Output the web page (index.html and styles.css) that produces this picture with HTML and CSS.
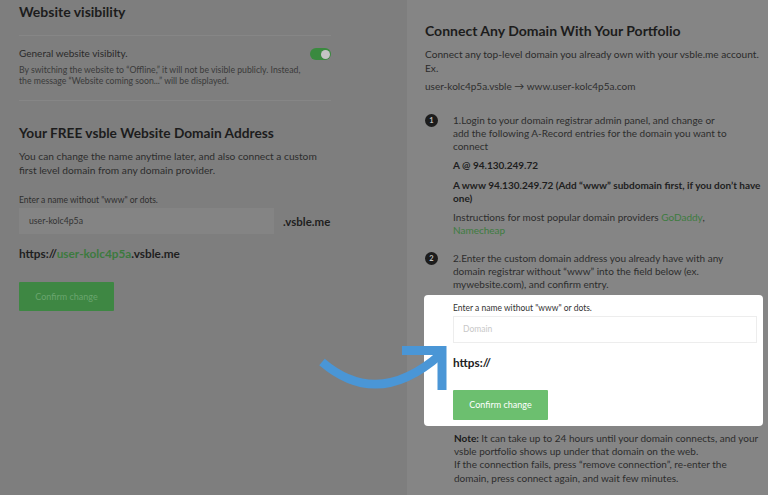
FILE: index.html
```html
<!DOCTYPE html>
<html>
<head>
<meta charset="utf-8">
<link rel="stylesheet" href="styles.css">
</head>
<body>
<div class="page">
  <section class="left">
    <h2 class="h-vis">Website visibility</h2>
    <div class="divider d1"></div>
    <div class="vis-row">
      <div class="vis-text">
        <div class="vis-title">General website visibilty.</div>
        <div class="vis-desc">By switching the website to “Offline,” it will not be visible publicly. Instead,<br>the message “Website coming soon...” will be displayed.</div>
      </div>
      <div class="toggle"><span class="knob"></span></div>
    </div>
    <div class="divider d2"></div>
    <h2 class="h-free">Your FREE vsble Website Domain Address</h2>
    <p class="free-body">You can change the name anytime later, and also connect a custom<br>first level domain from any domain provider.</p>
    <div class="label-l">Enter a name without "www" or dots.</div>
    <div class="input-row">
      <div class="input-l">user-kolc4p5a</div>
      <div class="suffix">.vsble.me</div>
    </div>
    <div class="url-l">https://<span class="green">user-kolc4p5a</span>.vsble.me</div>
    <div class="btn-l">Confirm change</div>
  </section>
  <section class="right">
    <h2 class="h-conn">Connect Any Domain With Your Portfolio</h2>
    <p class="conn-body">Connect any top-level domain you already own with your vsble.me account.<br>Ex.</p>
    <p class="example">user-kolc4p5a.vsble → www.user-kolc4p5a.com</p>
    <div class="step s1">
      <span class="num">1</span>
      <div class="step-text">
        <p>1.Login to your domain registrar admin panel, and change or<br>add the following A-Record entries for the domain you want to<br>connect</p>
        <p class="bold b1">A @ 94.130.249.72</p>
        <p class="bold b2">A www 94.130.249.72 (Add “www” subdomain first, if you don’t have<br>one)</p>
        <p class="instr">Instructions for most popular domain providers <span class="lgreen">GoDaddy</span>,<br><span class="lgreen">Namecheap</span></p>
      </div>
    </div>
    <div class="step s2">
      <span class="num">2</span>
      <div class="step-text">
        <p>2.Enter the custom domain address you already have with any<br>domain registrar without “www” into the field below (ex.<br>mywebsite.com), and confirm entry.</p>
      </div>
    </div>
    <div class="highlight">
      <div class="label-r">Enter a name without "www" or dots.</div>
      <div class="input-r">Domain</div>
      <div class="url-r">https://</div>
      <div class="btn-r">Confirm change</div>
    </div>
    <p class="note"><b>Note:</b> It can take up to 24 hours until your domain connects, and your<br>vsble portfolio shows up under that domain on the web.<br>If the connection fails, press “remove connection”, re-enter the<br>domain, press connect again, and wait few minutes.</p>
  </section>
  <svg class="arrow" width="768" height="495" viewBox="0 0 768 495">
    <path d="M322 362 Q 378 410 441 354" fill="none" stroke="#4a96d6" stroke-width="8.5"/>
    <path d="M402 350.5 H442 V390" fill="none" stroke="#4a96d6" stroke-width="9" stroke-linejoin="miter"/>
  </svg>
</div>
</body>
</html>
```
FILE: styles.css
```css
* { box-sizing: border-box; margin: 0; padding: 0; }
html, body { width: 768px; height: 495px; overflow: hidden; }
body { font-family: Lato, "Noto Sans", sans-serif; color: #2b2b2b; background: #7e7e7e; }
.page { position: relative; display: flex; width: 768px; height: 495px; }
.left { flex: none; width: 407px; min-width: 0; padding-left: 19px; padding-right: 76px; background: #7e7e7e; }
.right { flex: 1; min-width: 0; background: #858585; padding: 21px 5px 0 18px; }
h2 { font-weight: 700; color: #1c1c1c; }
.h-vis { font-size: 14px; line-height: 20px; margin-top: 2px; }
.divider { height: 1px; background: #868686; }
.d1 { margin-top: 13px; }
.vis-row { display: flex; justify-content: space-between; align-items: flex-start; margin-top: 10px; }
.vis-title { font-size: 10px; line-height: 14px; color: #2a2a2a; }
.vis-desc { font-size: 8.7px; line-height: 11px; color: #3a3a3a; margin-top: 3.5px; white-space: nowrap; }
.toggle { flex: none; width: 21px; height: 12px; border-radius: 6px; background: #3a8a3f; margin-top: 2px; display: flex; justify-content: flex-end; align-items: center; padding-right: 1.5px; }
.knob { width: 9px; height: 9px; border-radius: 50%; background: #c4c4c4; }
.d2 { margin-top: 14.5px; }
.h-free { font-size: 13.7px; line-height: 20px; margin-top: 22px; }
.free-body { font-size: 10.2px; line-height: 14px; margin-top: 6px; color: #2d2d2d; }
.label-l { font-size: 8.5px; line-height: 11px; margin-top: 17.5px; color: #2e2e2e; }
.input-row { display: flex; align-items: center; margin-top: 2.5px; }
.input-l { flex: none; width: 255px; height: 26px; background: #848484; font-size: 8.7px; line-height: 26px; padding-left: 10px; color: #333; }
.suffix { flex: none; font-size: 11.5px; font-weight: 700; margin-left: 9px; color: #1e1e1e; }
.url-l { font-size: 11.8px; font-weight: 700; line-height: 16px; margin-top: 12px; color: #1e1e1e; }
.green { color: #3c7a3e; }
.btn-l { width: 95px; height: 29px; margin-top: 20px; background: #3e8743; color: #6aa56e; font-size: 9px; line-height: 29px; text-align: center; border-radius: 1px; }
.h-conn { font-size: 14px; line-height: 20px; }
.conn-body { font-size: 10.15px; line-height: 14px; margin-top: 6px; color: #2b2b2b; white-space: nowrap; }
.example { font-size: 10px; line-height: 14px; margin-top: 4px; color: #2e2e2e; }
.step { display: flex; }
.s1 { margin-top: 20.5px; }
.s2 { margin-top: 15px; }
.num { flex: none; width: 13px; height: 13px; border-radius: 50%; background: #1c1c1c; color: #bdbdbd; font-size: 7.5px; font-weight: 700; line-height: 13px; text-align: center; margin-right: 15px; }
.step-text p { font-size: 10px; line-height: 13px; color: #2d2d2d; white-space: nowrap; }
.step-text .bold { font-weight: 700; color: #1e1e1e; }
.step-text .b1 { margin-top: 6px; }
.step-text .b2 { margin-top: 7px; }
.step-text .instr { margin-top: 6px; }
.lgreen { color: #3d7c40; }
.highlight { position: relative; z-index: 2; background: #fff; border-radius: 4px; margin: 4.5px 0 0 -1px; padding: 7.5px 6px 6px 29px; }
.label-r { font-size: 8.5px; line-height: 11px; color: #333; }
.input-r { height: 27px; margin-top: 2.5px; border: 1px solid #ededed; font-size: 8.5px; line-height: 25px; padding-left: 9px; color: #c8c8c8; }
.url-r { font-size: 11.8px; font-weight: 700; line-height: 16px; margin-top: 12px; color: #222; }
.btn-r { width: 95px; height: 30px; margin-top: 19px; background: #6cbf6f; color: #fff; font-size: 9px; line-height: 30px; text-align: center; border-radius: 1px; }
.note { font-size: 10px; line-height: 13.4px; margin: 5.5px 0 0 29px; color: #2d2d2d; white-space: nowrap; }
.note b { color: #1a1a1a; }
.arrow { position: absolute; left: 0; top: 0; z-index: 3; pointer-events: none; }
```
